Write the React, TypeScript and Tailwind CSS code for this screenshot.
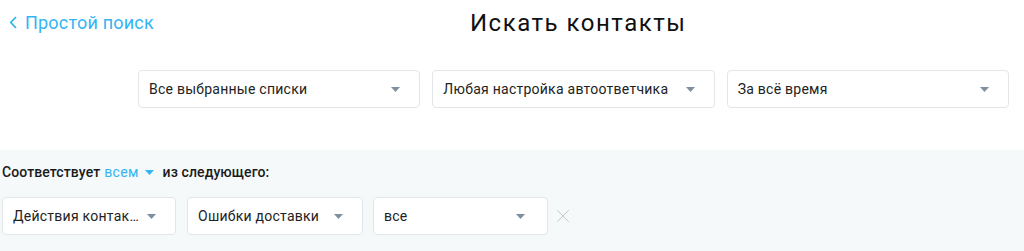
import { X } from 'lucide-react'

function Caret({ color = '#7f8f9f' }: { color?: string }) {
  return (
    <svg width="9" height="5" viewBox="0 0 9 5" className="shrink-0">
      <path d="M0 0h9L4.5 5z" fill={color} />
    </svg>
  )
}

function Select({ label, className = '' }: { label: string; className?: string }) {
  return (
    <div
      className={`flex h-[38px] items-center justify-between gap-[6px] rounded-[4px] border border-[#e3e6e8] bg-white pl-[10px] pr-[19px] ${className}`}
    >
      <span className="truncate text-[14px] tracking-[0.25px] text-[#222]">{label}</span>
      <Caret />
    </div>
  )
}

export default function App() {
  return (
    <div className="h-[251px] w-[1024px] overflow-hidden bg-white font-['Roboto',sans-serif]">
      {/* Header */}
      <div className="flex h-[44px] items-center">
        <div className="flex w-[470px] items-center gap-[8px] pl-[9px] pt-[1px] text-[18px] tracking-[0.2px] text-[#33b5f3]">
          <svg width="8" height="13" viewBox="0 0 8 13">
            <path d="M7 1L1.8 6.5L7 12" stroke="#33b5f3" strokeWidth="1.8" fill="none" />
          </svg>
          <span>Простой поиск</span>
        </div>
        <h1 className="pt-[1px] text-[24px] font-normal tracking-[1.5px] text-[#111]">Искать контакты</h1>
      </div>

      {/* Filters */}
      <div className="mt-[26px] grid grid-cols-3 gap-[12px] pl-[138px] pr-[15px]">
        <Select label="Все выбранные списки" />
        <Select label="Любая настройка автоответчика" />
        <Select label="За всё время" />
      </div>

      {/* Conditions */}
      <div className="mt-[42px] h-[101px] bg-[#f5f9fa] pl-[2px]">
        <div className="flex items-center pt-[12px] text-[14px] font-medium tracking-[0.1px] text-[#1a1a1a]">
          <span>Соответствует</span>
          <span className="ml-[4px] font-normal tracking-[0.3px] text-[#33b5f3]">всем</span>
          <span className="ml-[6px]">
            <Caret color="#33b5f3" />
          </span>
          <span className="ml-[9px]">из следующего:</span>
        </div>
        <div className="mt-[14px] flex items-center">
          <Select label="Действия контактов" className="w-[174px]" />
          <Select label="Ошибки доставки" className="ml-[11px] w-[176px]" />
          <Select label="все" className="ml-[10px] w-[175px] pr-[22px]" />
          <X className="ml-[4px] h-[22px] w-[22px] text-[#bcc3c9]" strokeWidth={1} />
        </div>
      </div>
    </div>
  )
}
